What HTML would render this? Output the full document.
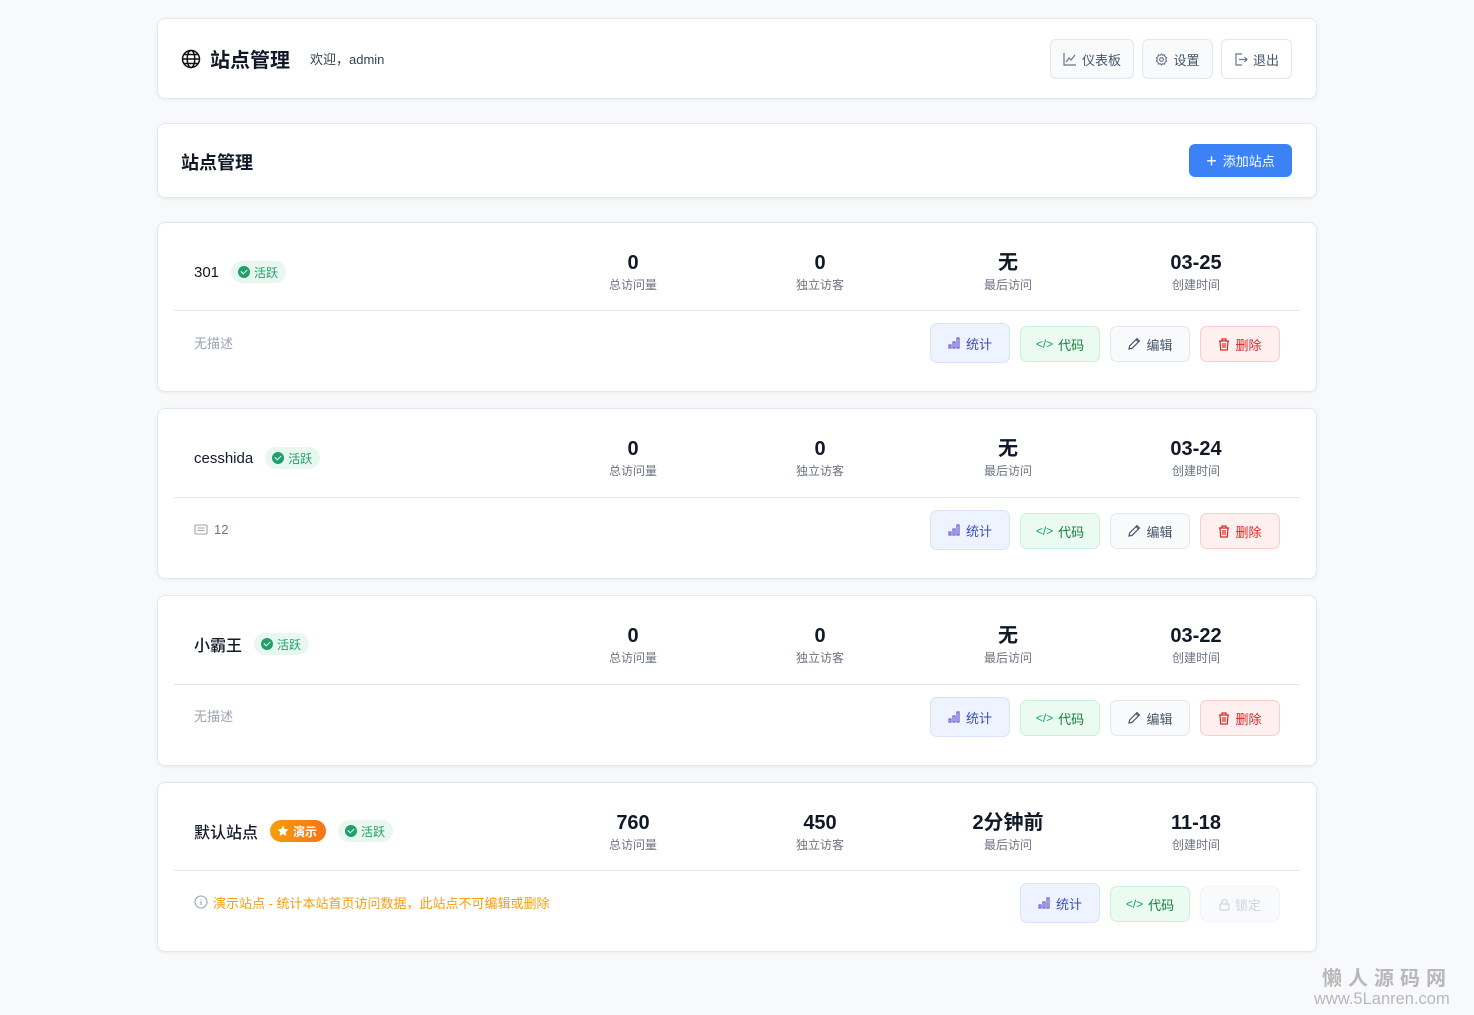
<!DOCTYPE html>
<html><head><meta charset="utf-8"><style>
*{box-sizing:border-box;margin:0;padding:0}
body{width:1474px;height:1015px;background:#f8f9fb;font-family:"Liberation Sans","Noto Sans CJK SC",sans-serif;color:#1f2937;position:relative;overflow:hidden}
.card{position:absolute;left:157px;width:1160px;background:#fff;border:1px solid #e2e8f0;border-radius:8px;box-shadow:0 1px 3px rgba(15,23,42,.06)}
.abs{position:absolute}
.hbtn{position:absolute;top:20px;height:40px;border:1px solid #e2e8f0;border-radius:6px;background:#f8fafc;font-size:13px;color:#475569;display:flex;align-items:center;justify-content:center;gap:5px}
.name{position:absolute;left:36px;top:37px;font-size:15px;font-weight:500;color:#111827;display:flex;align-items:center;height:24px}
.badge{display:inline-flex;align-items:center;gap:4px;height:22px;padding:0 8px 0 7px;border-radius:11px;background:#e8f7ef;color:#22a06b;font-size:12px;margin-left:12px;font-weight:400}
.chk{width:12px;height:12px;border-radius:50%;background:#22a06b;display:inline-block;position:relative}
.chk:after{content:"";position:absolute;left:3px;top:3px;width:5px;height:3px;border-left:1.5px solid #fff;border-bottom:1.5px solid #fff;transform:rotate(-45deg)}
.stat{position:absolute;top:28px;width:160px;margin-left:-81px;text-align:center}
.stat b{display:block;font-size:20px;font-weight:700;color:#111827;line-height:24px}
.stat span{display:block;font-size:12px;color:#6b7280;line-height:16px;margin-top:2px}
.div{position:absolute;left:16px;right:16px;top:87px;height:1px;background:#e2e8f0}
.desc{position:absolute;left:36px;top:109px;font-size:13px;color:#9ca3af;display:flex;align-items:center;gap:6px;height:20px}
.btn{position:absolute;width:80px;height:36px;top:103px;border-radius:7px;font-size:13px;display:flex;align-items:center;justify-content:center;gap:5px;border:1px solid}
.b1{top:100px;height:40px;background:#eef4ff;border-color:#d6e3fb;color:#3b4cb8}
.b2{background:#ebfbf2;border-color:#c9f1da;color:#15803d}
.b3{background:#f8fafc;border-color:#e2e8f0;color:#475569}
.b4{background:#fff0f0;border-color:#fecaca;color:#dc2626}
.b5{background:#f8fafc;border-color:#f1f5f9;color:#cbd5e1}
</style></head><body>

<div class="card" style="top:18px;height:81px">
  <div class="abs" style="left:23px;top:25px;display:flex;align-items:center">
    <svg width="20" height="20" viewBox="0 0 20 20" fill="none" stroke="#111" stroke-width="1.5"><circle cx="10" cy="10" r="8.5"/><ellipse cx="10" cy="10" rx="3.8" ry="8.5"/><path d="M1.5 10h17M3 5.5h14M3 14.5h14"/></svg>
    <span style="font-size:20px;font-weight:700;margin-left:9px;color:#111827">站点管理</span>
    <span style="font-size:13px;color:#374151;margin-left:20px">欢迎，admin</span>
  </div>
  <div class="hbtn" style="left:892px;width:84px"><svg width="14" height="14" viewBox="0 0 14 14" fill="none" stroke="#64748b" stroke-width="1.2"><path d="M1 1v12h12M3 10l3-4 2 2 4-5"/></svg>仪表板</div>
  <div class="hbtn" style="left:984px;width:71px"><svg width="13" height="13" viewBox="0 0 14 14" fill="none" stroke="#64748b" stroke-width="1.2"><circle cx="7" cy="7" r="2"/><path d="M7 1l1.3 1.5 2-.4.5 2 1.7 1-.9 1.9.9 1.9-1.7 1-.5 2-2-.4L7 13l-1.3-1.5-2 .4-.5-2-1.7-1 .9-1.9-.9-1.9 1.7-1 .5-2 2 .4z"/></svg>设置</div>
  <div class="hbtn" style="left:1063px;width:71px;background:#fff"><svg width="14" height="13" viewBox="0 0 14 13" fill="none" stroke="#64748b" stroke-width="1.2"><path d="M8 1H2v11h6M5 6.5h8M10.5 4l2.5 2.5L10.5 9"/></svg>退出</div>
</div>

<div class="card" style="top:123px;height:75px">
  <div class="abs" style="left:23px;top:25px;font-size:18px;font-weight:700;color:#111827">站点管理</div>
  <div class="abs" style="left:1031px;top:20px;width:103px;height:33px;background:#3b82f6;border-radius:6px;color:#fff;font-size:13px;display:flex;align-items:center;justify-content:center;gap:6px"><span style="font-size:18px;font-weight:300;line-height:1">+</span>添加站点</div>
</div>

<!-- card 1 -->
<div class="card" style="top:222px;height:170px">
  <div class="name">301<span class="badge"><i class="chk"></i>活跃</span></div>
  <div class="stat" style="left:476px"><b>0</b><span>总访问量</span></div>
  <div class="stat" style="left:663px"><b>0</b><span>独立访客</span></div>
  <div class="stat" style="left:851px"><b>无</b><span>最后访问</span></div>
  <div class="stat" style="left:1039px"><b>03-25</b><span>创建时间</span></div>
  <div class="div"></div>
  <div class="desc">无描述</div>
  <div class="btn b1" style="left:772px"><svg width="13" height="12" viewBox="0 0 13 12" fill="none" stroke="#6d5bd0" stroke-width="1.2"><rect x="1" y="8" width="2" height="3"/><rect x="5" y="5" width="2" height="6"/><rect x="9" y="1" width="2" height="10"/></svg>统计</div>
  <div class="btn b2" style="left:862px"><span style="font-size:12px;color:#0f9f6e">&lt;/&gt;</span>代码</div>
  <div class="btn b3" style="left:952px"><svg width="14" height="14" viewBox="0 0 14 14" fill="none" stroke="#475569" stroke-width="1.2"><path d="M2 12l.6-3L10 1.6 12.4 4 5 11.4z M9 2.6l2.4 2.4"/></svg>编辑</div>
  <div class="btn b4" style="left:1042px"><svg width="12" height="13" viewBox="0 0 12 13" fill="none" stroke="#dc2626" stroke-width="1.2"><path d="M1 3h10M4 3V1h4v2M2 3l.7 9h6.6L10 3M5 5v5M7 5v5"/></svg>删除</div>
</div>

<!-- card 2 -->
<div class="card" style="top:408px;height:171px">
  <div class="name">cesshida<span class="badge"><i class="chk"></i>活跃</span></div>
  <div class="stat" style="left:476px"><b>0</b><span>总访问量</span></div>
  <div class="stat" style="left:663px"><b>0</b><span>独立访客</span></div>
  <div class="stat" style="left:851px"><b>无</b><span>最后访问</span></div>
  <div class="stat" style="left:1039px"><b>03-24</b><span>创建时间</span></div>
  <div class="div" style="top:88px"></div>
  <div class="desc" style="top:110px;color:#6b7280"><svg width="14" height="11" viewBox="0 0 14 11" fill="none" stroke="#9ca3af" stroke-width="1.1"><rect x="1" y="1" width="12" height="9" rx="1"/><path d="M3.5 4h7M3.5 6.5h7"/></svg>12</div>
  <div class="btn b1" style="left:772px;top:101px"><svg width="13" height="12" viewBox="0 0 13 12" fill="none" stroke="#6d5bd0" stroke-width="1.2"><rect x="1" y="8" width="2" height="3"/><rect x="5" y="5" width="2" height="6"/><rect x="9" y="1" width="2" height="10"/></svg>统计</div>
  <div class="btn b2" style="left:862px;top:104px"><span style="font-size:12px;color:#0f9f6e">&lt;/&gt;</span>代码</div>
  <div class="btn b3" style="left:952px;top:104px"><svg width="14" height="14" viewBox="0 0 14 14" fill="none" stroke="#475569" stroke-width="1.2"><path d="M2 12l.6-3L10 1.6 12.4 4 5 11.4z M9 2.6l2.4 2.4"/></svg>编辑</div>
  <div class="btn b4" style="left:1042px;top:104px"><svg width="12" height="13" viewBox="0 0 12 13" fill="none" stroke="#dc2626" stroke-width="1.2"><path d="M1 3h10M4 3V1h4v2M2 3l.7 9h6.6L10 3M5 5v5M7 5v5"/></svg>删除</div>
</div>

<!-- card 3 -->
<div class="card" style="top:595px;height:171px">
  <div class="name" style="font-size:16px;top:36px">小霸王<span class="badge"><i class="chk"></i>活跃</span></div>
  <div class="stat" style="left:476px"><b>0</b><span>总访问量</span></div>
  <div class="stat" style="left:663px"><b>0</b><span>独立访客</span></div>
  <div class="stat" style="left:851px"><b>无</b><span>最后访问</span></div>
  <div class="stat" style="left:1039px"><b>03-22</b><span>创建时间</span></div>
  <div class="div" style="top:88px"></div>
  <div class="desc" style="top:109px">无描述</div>
  <div class="btn b1" style="left:772px;top:101px"><svg width="13" height="12" viewBox="0 0 13 12" fill="none" stroke="#6d5bd0" stroke-width="1.2"><rect x="1" y="8" width="2" height="3"/><rect x="5" y="5" width="2" height="6"/><rect x="9" y="1" width="2" height="10"/></svg>统计</div>
  <div class="btn b2" style="left:862px;top:104px"><span style="font-size:12px;color:#0f9f6e">&lt;/&gt;</span>代码</div>
  <div class="btn b3" style="left:952px;top:104px"><svg width="14" height="14" viewBox="0 0 14 14" fill="none" stroke="#475569" stroke-width="1.2"><path d="M2 12l.6-3L10 1.6 12.4 4 5 11.4z M9 2.6l2.4 2.4"/></svg>编辑</div>
  <div class="btn b4" style="left:1042px;top:104px"><svg width="12" height="13" viewBox="0 0 12 13" fill="none" stroke="#dc2626" stroke-width="1.2"><path d="M1 3h10M4 3V1h4v2M2 3l.7 9h6.6L10 3M5 5v5M7 5v5"/></svg>删除</div>
</div>

<!-- card 4 -->
<div class="card" style="top:782px;height:170px">
  <div class="name" style="font-size:16px;top:36px">默认站点
    <span class="badge" style="background:linear-gradient(90deg,#f59e0b,#f97316);color:#fff;font-weight:700;padding:0 9px 0 7px"><svg width="12" height="12" viewBox="0 0 12 12"><path d="M6 .5l1.7 3.5 3.8.5-2.8 2.6.7 3.8L6 9.1 2.6 10.9l.7-3.8L.5 4.5l3.8-.5z" fill="#fff"/></svg>演示</span>
    <span class="badge"><i class="chk"></i>活跃</span></div>
  <div class="stat" style="left:476px"><b>760</b><span>总访问量</span></div>
  <div class="stat" style="left:663px"><b>450</b><span>独立访客</span></div>
  <div class="stat" style="left:851px"><b>2分钟前</b><span>最后访问</span></div>
  <div class="stat" style="left:1039px"><b>11-18</b><span>创建时间</span></div>
  <div class="div" style="top:87px"></div>
  <div class="desc" style="top:109px;color:#f59e0b;gap:5px"><svg width="14" height="14" viewBox="0 0 14 14" fill="none" stroke="#94a3b8" stroke-width="1.1"><circle cx="7" cy="7" r="6"/><path d="M7 6v4M7 4v.8"/></svg>演示站点 - 统计本站首页访问数据，此站点不可编辑或删除</div>
  <div class="btn b1" style="left:862px"><svg width="13" height="12" viewBox="0 0 13 12" fill="none" stroke="#6d5bd0" stroke-width="1.2"><rect x="1" y="8" width="2" height="3"/><rect x="5" y="5" width="2" height="6"/><rect x="9" y="1" width="2" height="10"/></svg>统计</div>
  <div class="btn b2" style="left:952px"><span style="font-size:12px;color:#0f9f6e">&lt;/&gt;</span>代码</div>
  <div class="btn b5" style="left:1042px"><svg width="11" height="13" viewBox="0 0 11 13" fill="none" stroke="#cbd5e1" stroke-width="1.2"><rect x="1" y="6" width="9" height="6" rx="1"/><path d="M3 6V4a2.5 2.5 0 015 0v2"/></svg>锁定</div>
</div>

<div class="abs" style="left:1322px;top:962px;font-size:20px;font-weight:700;color:#b8b8b8;letter-spacing:6px">懒人源码网</div>
<div class="abs" style="left:1314px;top:990px;font-size:16.5px;color:#b8b8b8">www.5Lanren.com</div>
</body></html>
